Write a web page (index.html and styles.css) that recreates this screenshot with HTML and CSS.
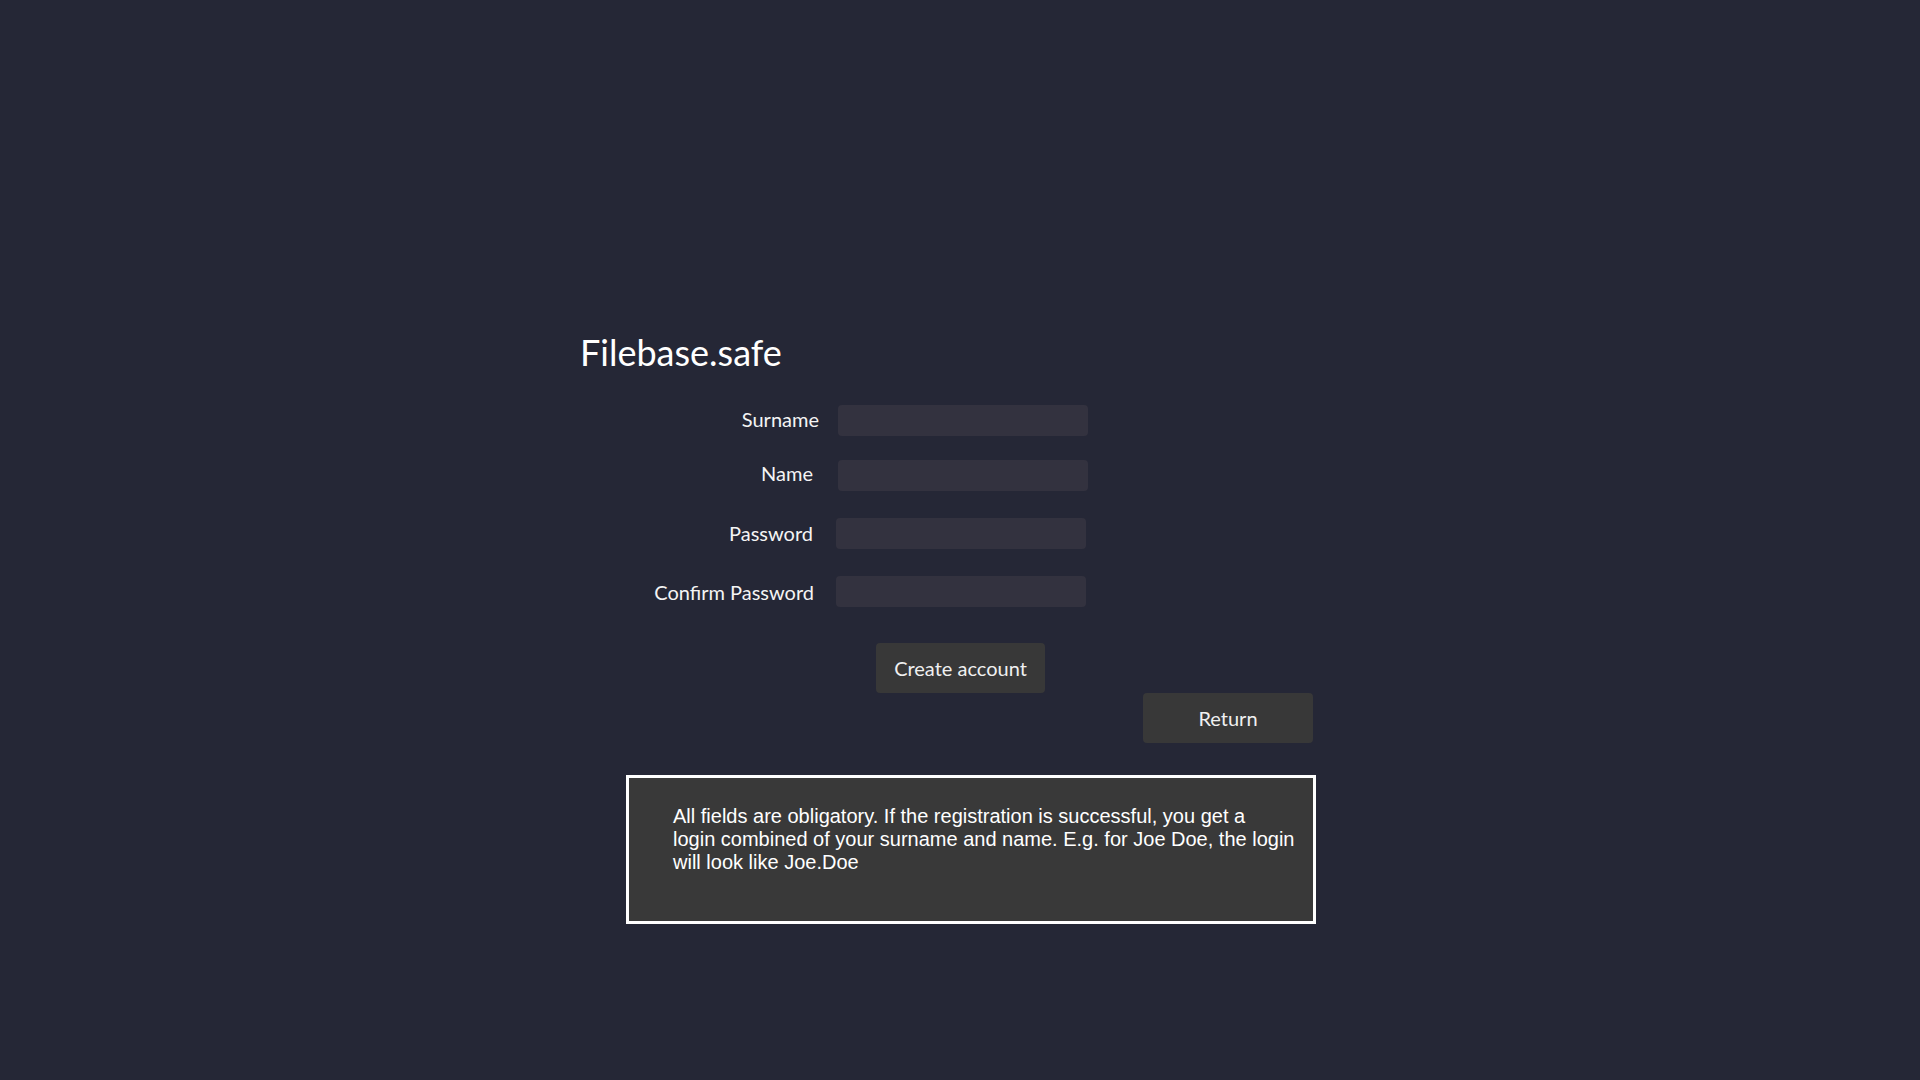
FILE: index.html
```html
<!DOCTYPE html>
<html lang="en">
<head>
<meta charset="utf-8">
<title>Filebase.safe</title>
<link rel="stylesheet" href="styles.css">
</head>
<body>
<main class="page">
  <h1 class="title">Filebase.safe</h1>
  <div class="row row-1">
    <label class="label label-up4" for="surname">Surname</label>
    <input class="field" id="surname" type="text">
  </div>
  <div class="row row-2">
    <label class="label label-up6 label-in6" for="name">Name</label>
    <input class="field" id="name" type="text">
  </div>
  <div class="row row-3">
    <label class="label label-up2 label-in6" for="pw">Password</label>
    <input class="field field-left" id="pw" type="password">
  </div>
  <div class="row row-4">
    <label class="label label-in5" for="pw2">Confirm Password</label>
    <input class="field field-left" id="pw2" type="password">
  </div>
  <button class="btn btn-create" type="button">Create account</button>
  <button class="btn btn-return" type="button">Return</button>
  <div class="info">
    <p class="info-text">All fields are obligatory. If the registration is successful, you get a<br>login combined of your surname and name. E.g. for Joe Doe, the login<br>will look like Joe.Doe</p>
  </div>
</main>
</body>
</html>
```

FILE: styles.css
```css
html, body {
  margin: 0;
  padding: 0;
  background: #252736;
  height: 100%;
}

.page {
  box-sizing: border-box;
  width: 1920px;
  height: 1080px;
  padding: 328px 0 0 580px;
  font-family: Lato, "Noto Sans", sans-serif;
  color: #f4f4f4;
  display: flex;
  flex-direction: column;
  align-items: flex-start;
}

.title {
  margin: 0;
  font-size: 36px;
  line-height: 48px;
  font-weight: 400;
  color: #ffffff;
}

.row {
  display: flex;
  align-items: center;
  height: 31px;
}
.row-1 { margin-top: 29px; }
.row-2 { margin-top: 24px; }
.row-3 { margin-top: 27px; }
.row-4 { margin-top: 27px; }

.label {
  box-sizing: border-box;
  width: 239px;
  text-align: right;
  font-size: 20px;
  line-height: 20px;
}
.label-up2 { padding-bottom: 2px; }
.label-up4 { padding-bottom: 4px; }
.label-up6 { padding-bottom: 6px; }
.label-in6 { padding-right: 6px; }
.label-in5 { padding-right: 5px; }

.field {
  box-sizing: border-box;
  width: 250px;
  height: 100%;
  margin: 0 0 0 19px;
  padding: 0 8px;
  border: none;
  border-radius: 4px;
  background: #33323f;
  color: #f4f4f4;
  font: inherit;
  font-size: 16px;
  outline: none;
}
.field-left { margin-left: 17px; }

.btn {
  box-sizing: border-box;
  width: 170px;
  height: 50px;
  padding: 0;
  border: none;
  border-radius: 4px;
  background: #383838;
  color: #f0f0f0;
  font-family: inherit;
  font-size: 20px;
  line-height: 50px;
  cursor: pointer;
}
.btn-create { margin: 36px 0 0 296px; width: 169px; }
.btn-return { margin: 0 0 0 563px; }

.info {
  box-sizing: border-box;
  width: 690px;
  height: 149px;
  margin: 32px 0 0 46px;
  padding: 27px 8px 0 44px;
  border: 3px solid #ffffff;
  background: #393939;
}

.info-text {
  margin: 0;
  font-family: "Liberation Sans", Arial, sans-serif;
  font-size: 20px;
  line-height: 23px;
  color: #ffffff;
  white-space: nowrap;
}
```
